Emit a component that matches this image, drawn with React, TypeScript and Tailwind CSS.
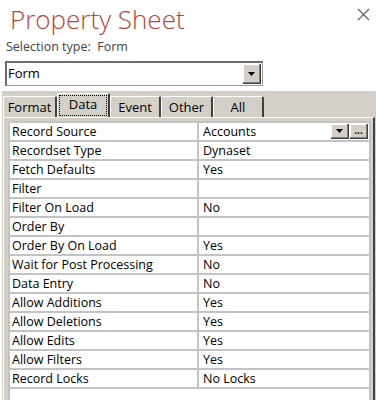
import React from "react";

const rows: [string, string][] = [
  ["Record Source", "Accounts"],
  ["Recordset Type", "Dynaset"],
  ["Fetch Defaults", "Yes"],
  ["Filter", ""],
  ["Filter On Load", "No"],
  ["Order By", ""],
  ["Order By On Load", "Yes"],
  ["Wait for Post Processing", "No"],
  ["Data Entry", "No"],
  ["Allow Additions", "Yes"],
  ["Allow Deletions", "Yes"],
  ["Allow Edits", "Yes"],
  ["Allow Filters", "Yes"],
  ["Record Locks", "No Locks"],
];

const tabs = [
  { label: "Format", w: "w-[54px]" },
  { label: "Data", w: "w-[53px]", active: true },
  { label: "Event", w: "w-[51px]" },
  { label: "Other", w: "w-[52px]" },
  { label: "All", w: "w-[51px]" },
];

const DownArrow: React.FC = () => (
  <svg width="7" height="4" viewBox="0 0 7 4">
    <path d="M0 0h7L3.5 4z" fill="#000" />
  </svg>
);

const RaisedButton: React.FC<{ className?: string; children: React.ReactNode }> = ({ className = "", children }) => (
  <div
    className={`flex items-center justify-center bg-[#d4d0c8] border-r border-b border-[#404040] shadow-[inset_-1px_-1px_0_#808080,inset_1px_1px_0_#ffffff] ${className}`}
  >
    {children}
  </div>
);

export default function App() {
  return (
    <div className="w-[380px] h-[400px] bg-white overflow-hidden flex flex-col font-['Segoe_UI','Open_Sans',sans-serif] text-black">
      {/* Header */}
      <div className="h-[37px] flex items-start justify-between">
        <h1 className="pl-[10px] pt-[2px] text-[26px] leading-[34px] font-light text-[#b5453c]">Property Sheet</h1>
        <svg className="mt-[8px] mr-[10px]" width="13" height="13" viewBox="0 0 13 13">
          <path d="M1 1L12 12M12 1L1 12" stroke="#6b6b6b" strokeWidth="1.4" />
        </svg>
      </div>
      <div className="h-[20px] pl-[6px] text-[12.5px] leading-[20px] text-[#444]">Selection type:&nbsp; Form</div>

      {/* Object combo */}
      <div className="mt-[4px] ml-[5px] w-[258px] h-[25px] flex border-t-2 border-l-2 border-[#6d6d6d] border-r border-b border-r-[#9a9a9a] border-b-[#9a9a9a] bg-white">
        <div className="flex-1 pl-[1px] text-[13px] leading-[21px]">Form</div>
        <RaisedButton className="w-[18px] h-[20px] mt-[1px] mr-[1px]">
          <DownArrow />
        </RaisedButton>
      </div>

      {/* Tabs + grid */}
      <div className="mt-[5px] ml-[2px] w-[374px] flex-1 bg-[#d4d0c8] flex flex-col">
        <div className="h-[26px] flex items-end pl-[1px]">
          {tabs.map((t) =>
            t.active ? (
              <div
                key={t.label}
                className={`${t.w} h-[24px] relative border-l border-t border-white border-r-2 border-r-[#404040] rounded-t-[2px] flex justify-center text-[13px] leading-[19px] pt-[1px]`}
              >
                <span className="absolute left-[1px] right-[1px] top-[1px] bottom-[1px] border border-dotted border-black" />
                {t.label}
              </div>
            ) : (
              <div
                key={t.label}
                className={`${t.w} h-[21px] border-l border-t border-white border-r-2 border-r-[#404040] rounded-t-[2px] flex justify-center text-[13px] leading-[19px] pt-[1px]`}
              >
                {t.label}
              </div>
            )
          )}
        </div>

        <div className="ml-[1px] w-[372px] flex-1 flex flex-col border-l border-t border-white border-r-2 border-r-[#404040] pl-[4px] pr-[2px] pt-[3px]">
          <div className="w-[363px] flex-1 bg-white border-x-2 border-t-2 border-[#c3c3c3] flex flex-col text-[12.5px]">
            {rows.map(([label, value], i) => (
              <div key={label} className="h-[19px] flex border-b-2 border-[#c3c3c3]">
                <div className="w-[187px] pl-[2px] leading-[17px] whitespace-nowrap">{label}</div>
                <div className="w-[2px] bg-[#c3c3c3]" />
                <div className="flex-1 flex items-center pl-[4px] leading-[17px]">
                  <span className="flex-1">{value}</span>
                  {i === 0 && (
                    <div className="flex gap-[1px] mr-[1px]">
                      <RaisedButton className="w-[18px] h-[15px]">
                        <DownArrow />
                      </RaisedButton>
                      <RaisedButton className="w-[18px] h-[15px] text-[10px] leading-none font-bold pb-[3px]">
                        ...
                      </RaisedButton>
                    </div>
                  )}
                </div>
              </div>
            ))}
          </div>
        </div>
      </div>
    </div>
  );
}
